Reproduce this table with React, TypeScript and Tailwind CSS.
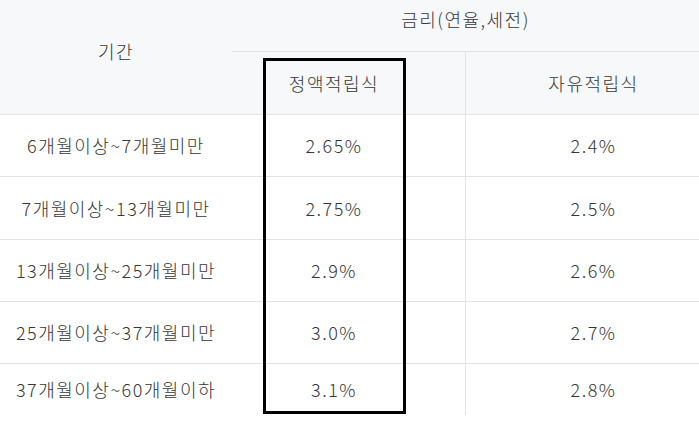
const rows = [
  { period: "6개월이상~7개월미만", fixed: "2.65%", free: "2.4%", h: "h-[62px]" },
  { period: "7개월이상~13개월미만", fixed: "2.75%", free: "2.5%", h: "h-[63px]" },
  { period: "13개월이상~25개월미만", fixed: "2.9%", free: "2.6%", h: "h-[62px]" },
  { period: "25개월이상~37개월미만", fixed: "3.0%", free: "2.7%", h: "h-[62px]" },
  { period: "37개월이상~60개월이하", fixed: "3.1%", free: "2.8%", h: "h-[52px]" },
];

export default function App() {
  return (
    <div className="relative h-[421px] w-[699px] overflow-hidden bg-white font-['Noto_Sans_CJK_KR',sans-serif] text-[18px] font-light tracking-[1.5px] text-[#363636]">
      {/* header */}
      <div className="flex bg-[#f7f8fa]">
        <div className="flex h-[114px] w-[232px] items-center justify-center pb-[12px]">기간</div>
        <div className="flex flex-1 flex-col">
          <div className="flex h-[52px] items-center justify-center border-b border-[#e2e3e5] pb-[12px]">
            금리(연율,세전)
          </div>
          <div className="flex h-[62px]">
            <div className="flex w-[233px] items-center justify-center pr-[29px]">정액적립식</div>
            <div className="flex flex-1 items-center justify-center border-l border-[#e2e3e5] pl-[22px]">
              자유적립식
            </div>
          </div>
        </div>
      </div>

      {/* body */}
      {rows.map((r) => (
        <div key={r.period} className={`flex border-t border-[#e2e3e5] ${r.h}`}>
          <div className="flex w-[232px] items-center justify-center">{r.period}</div>
          <div className="flex w-[233px] items-center justify-center pr-[29px]">{r.fixed}</div>
          <div className="flex flex-1 items-center justify-center border-l border-[#e2e3e5] pl-[22px]">
            {r.free}
          </div>
        </div>
      ))}

      {/* highlight box */}
      <div className="absolute left-[263px] top-[58px] h-[356px] w-[143px] border-[3px] border-black" />
    </div>
  );
}
